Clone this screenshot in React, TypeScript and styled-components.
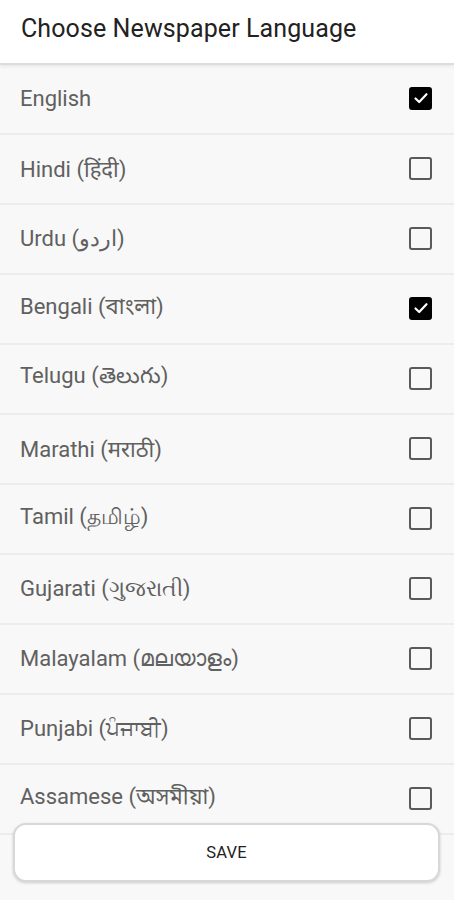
import React, { useState } from "react";
import styled, { createGlobalStyle } from "styled-components";

const Global = createGlobalStyle`
  html, body { margin: 0; padding: 0; background: #f8f8f8; }
  body { font-family: Roboto, "Noto Sans", "Noto Sans Devanagari", "Noto Sans Bengali", sans-serif; }
  * { box-sizing: border-box; }
`;

const Screen = styled.div`
  position: relative;
  width: 454px;
  height: 900px;
  overflow: hidden;
  background: #f8f8f8;
  display: flex;
  flex-direction: column;
`;

const Header = styled.header`
  height: 65px;
  flex: none;
  background: #ffffff;
  display: flex;
  align-items: center;
  padding: 0 0 6px 21px;
  border-bottom: 2px solid #dcdcdc;
  box-shadow: 0 2px 3px rgba(0, 0, 0, 0.06);
  font-size: 25px;
  color: #222;
  letter-spacing: 0.1px;
  position: relative;
  z-index: 1;
`;

const List = styled.div`
  flex: 1;
  overflow: hidden;
  display: flex;
  flex-direction: column;
`;

const Row = styled.label`
  flex: none;
  height: 70px;
  display: flex;
  align-items: center;
  justify-content: space-between;
  padding: 0 22px 2px 20px;
  border-bottom: 2px solid #ececec;
  font-size: 22px;
  color: #606060;
`;

const Box = styled.span<{ $checked: boolean }>`
  width: 23px;
  height: 23px;
  border-radius: 3px;
  border: 2px solid ${(p) => (p.$checked ? "#000" : "#5a5a5a")};
  background: ${(p) => (p.$checked ? "#000" : "transparent")};
  display: flex;
  align-items: center;
  justify-content: center;
`;

const SaveBar = styled.div`
  position: absolute;
  left: 13px;
  right: 14px;
  bottom: 18px;
`;

const SaveButton = styled.button`
  width: 100%;
  height: 59px;
  border-radius: 13px;
  background: #fff;
  border: 2px solid #d8d8d8;
  box-shadow: 0 1px 3px rgba(0, 0, 0, 0.18);
  font-family: Roboto, sans-serif;
  font-size: 16.5px;
  color: #222;
  letter-spacing: 0.2px;
  cursor: pointer;
`;

const languages = [
  { name: "English", checked: true },
  { name: "Hindi (हिंदी)", checked: false },
  { name: "Urdu (اردو)", checked: false },
  { name: "Bengali (বাংলা)", checked: true },
  { name: "Telugu (తెలుగు)", checked: false },
  { name: "Marathi (मराठी)", checked: false },
  { name: "Tamil (தமிழ்)", checked: false },
  { name: "Gujarati (ગુજરાતી)", checked: false },
  { name: "Malayalam (മലയാളം)", checked: false },
  { name: "Punjabi (ਪੰਜਾਬੀ)", checked: false },
  { name: "Assamese (অসমীয়া)", checked: false },
];

const Check = () => (
  <svg width="16" height="16" viewBox="0 0 16 16" fill="none">
    <path d="M2.5 8.5 L6.2 12 L13.5 4.2" stroke="#fff" strokeWidth="2.2" strokeLinecap="round" strokeLinejoin="round" />
  </svg>
);

export default function App() {
  const [state, setState] = useState(languages.map((l) => l.checked));
  return (
    <Screen>
      <Global />
      <Header>Choose Newspaper Language</Header>
      <List>
        {languages.map((l, i) => (
          <Row key={l.name} onClick={() => setState((s) => s.map((v, j) => (j === i ? !v : v)))}>
            <span>{l.name}</span>
            <Box $checked={state[i]}>{state[i] && <Check />}</Box>
          </Row>
        ))}
      </List>
      <SaveBar>
        <SaveButton>SAVE</SaveButton>
      </SaveBar>
    </Screen>
  );
}
